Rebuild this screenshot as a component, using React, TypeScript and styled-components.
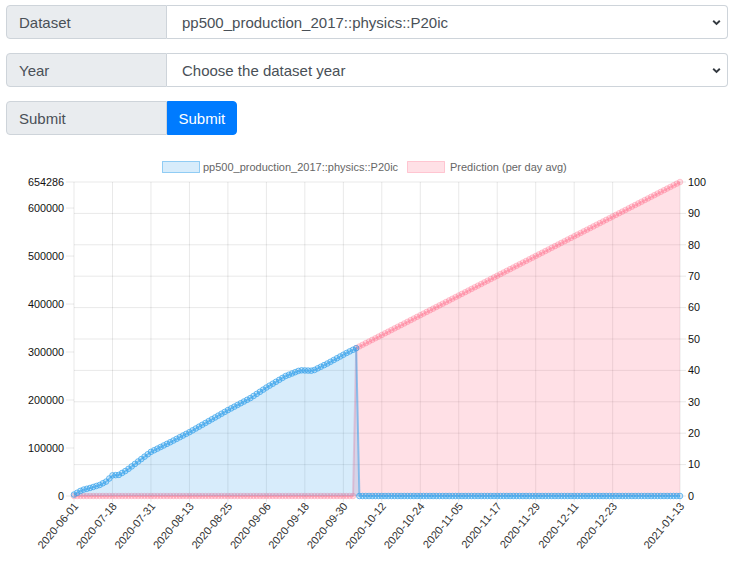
import React from "react";
import styled, { createGlobalStyle } from "styled-components";

const GlobalStyle = createGlobalStyle`
  html, body {
    margin: 0;
    padding: 0;
    background: #fff;
    overflow: hidden;
  }
  body {
    font-family: "Liberation Sans", Arial, sans-serif;
  }
`;

const Form = styled.div`
  padding: 5px 8px 0 6px;
`;

const InputGroup = styled.div`
  display: flex;
  height: 34px;
  margin-bottom: 14px;
`;

const Prepend = styled.div`
  width: 161px;
  box-sizing: border-box;
  display: flex;
  align-items: center;
  padding: 0 12px;
  background: #e9ecef;
  border: 1px solid #ced4da;
  border-radius: 4px 0 0 4px;
  color: #495057;
  font-size: 15px;
`;

const SelectBox = styled.div`
  flex: 1;
  display: flex;
  align-items: center;
  justify-content: space-between;
  padding: 0 6px 0 15px;
  border: 1px solid #ced4da;
  border-left: none;
  border-radius: 0 4px 4px 0;
  color: #495057;
  font-size: 15px;
`;

const SubmitButton = styled.button`
  height: 34px;
  padding: 0 10.5px;
  border: 1px solid #007bff;
  background: #007bff;
  color: #fff;
  font-family: inherit;
  font-size: 15px;
  border-radius: 0 4px 4px 0;
  cursor: pointer;
`;

const ChartSvg = styled.svg`
  display: block;
  font-family: "Liberation Sans", Arial, sans-serif;
`;

const Chevron = () => (
  <svg width="9" height="7" viewBox="0 0 9 7">
    <path d="M1.2 1.8 L4.5 5 L7.8 1.8" fill="none" stroke="#343a40" strokeWidth="1.9" />
  </svg>
);

// chart geometry
const X0 = 74;
const X1 = 680;
const Y0 = 496;
const Y1 = 182;
const N = 190;
const LEFT_MAX = 654286;
const CUT = 88;

const xAt = (i: number) => X0 + (i * (X1 - X0)) / (N - 1);
const yLeft = (v: number) => Y0 - (v / LEFT_MAX) * (Y0 - Y1);
const yRight = (v: number) => Y0 - (v / 100) * (Y0 - Y1);

const blueKeys: [number, number][] = [
  [0, 3000], [2.5, 12500], [5, 16700], [8, 23000], [10, 30000], [12, 43000],
  [14, 44000], [16.5, 54000], [20.6, 75000], [24, 92000], [30, 112000],
  [36, 133000], [42, 156000], [48, 179000], [55, 204000], [60, 226000],
  [66, 250000], [70.5, 262000], [74.5, 261000], [79, 276000], [85, 298000],
  [88, 308000],
];

const interp = (i: number) => {
  for (let k = 0; k < blueKeys.length - 1; k++) {
    const [a, va] = blueKeys[k];
    const [b, vb] = blueKeys[k + 1];
    if (i >= a && i <= b) return va + ((i - a) / (b - a)) * (vb - va);
  }
  return blueKeys[blueKeys.length - 1][1];
};

const idx = Array.from({ length: N }, (_, i) => i);
const bluePts = idx.map((i) => [xAt(i), i <= CUT ? yLeft(interp(i)) : Y0]);
const pinkPts = idx.map((i) => [
  xAt(i),
  i < CUT ? Y0 : yRight(47.1 + ((i - CUT) / (N - 1 - CUT)) * 52.9),
]);

const linePath = (pts: number[][]) =>
  pts.map(([x, y], k) => `${k ? "L" : "M"}${x.toFixed(1)} ${y.toFixed(1)}`).join(" ");
const areaPath = (pts: number[][]) =>
  `${linePath(pts)} L${X1} ${Y0} L${X0} ${Y0} Z`;

const xTicks: [number, string][] = [
  [0, "2020-06-01"], [12, "2020-07-18"], [24, "2020-07-31"], [36, "2020-08-13"],
  [48, "2020-08-25"], [60, "2020-09-06"], [72, "2020-09-18"], [84, "2020-09-30"],
  [96, "2020-10-12"], [108, "2020-10-24"], [120, "2020-11-05"], [132, "2020-11-17"],
  [144, "2020-11-29"], [156, "2020-12-11"], [168, "2020-12-23"], [189, "2021-01-13"],
];

const leftTicks = [0, 100000, 200000, 300000, 400000, 500000, 600000, 654286];
const rightTicks = [0, 10, 20, 30, 40, 50, 60, 70, 80, 90, 100];

const GRID = "rgba(0,0,0,0.09)";
const BLUE_LINE = "rgba(54,162,235,0.7)";
const BLUE_FILL = "rgba(54,162,235,0.2)";
const PINK_LINE = "rgba(255,99,132,0.3)";
const PINK_FILL = "rgba(255,99,132,0.2)";

function Chart() {
  return (
    <ChartSvg width="736" height="414" viewBox="0 149 736 414">
      {/* legend */}
      <rect x="162.5" y="161.5" width="37" height="11" fill={BLUE_FILL} stroke="rgba(54,162,235,0.5)" />
      <text x="203" y="171" fontSize="11" fill="#666">pp500_production_2017::physics::P20ic</text>
      <rect x="407.5" y="161.5" width="37" height="11" fill={PINK_FILL} stroke={PINK_LINE} />
      <text x="450" y="171" fontSize="11" fill="#666">Prediction (per day avg)</text>

      {/* grid */}
      {rightTicks.map((t) => (
        <line key={`h${t}`} x1={X0} x2={X1 + 6} y1={yRight(t)} y2={yRight(t)} stroke={GRID} />
      ))}
      {xTicks.map(([i]) => (
        <line key={`v${i}`} x1={xAt(i)} x2={xAt(i)} y1={Y1} y2={Y0 + 6} stroke={GRID} />
      ))}
      {leftTicks.map((t) => (
        <line key={`l${t}`} x1={X0 - 8} x2={X0} y1={yLeft(t)} y2={yLeft(t)} stroke={GRID} />
      ))}

      {/* datasets */}
      <path d={areaPath(pinkPts)} fill={PINK_FILL} />
      <path d={linePath(pinkPts)} fill="none" stroke={PINK_LINE} strokeWidth="2" />
      {pinkPts.map(([x, y], k) => (
        <circle key={`p${k}`} cx={x} cy={y} r="2.8" fill={PINK_FILL} stroke={PINK_LINE} />
      ))}
      <path d={areaPath(bluePts)} fill={BLUE_FILL} />
      <path d={linePath(bluePts)} fill="none" stroke="rgba(54,162,235,0.55)" strokeWidth="2" />
      {bluePts.map(([x, y], k) => (
        <circle key={`b${k}`} cx={x} cy={y} r="2.8" fill={BLUE_FILL} stroke={BLUE_LINE} />
      ))}

      {/* axis labels */}
      {leftTicks.map((t) => (
        <text key={`lt${t}`} x={X0 - 10} y={yLeft(t)} dy="0.35em" fontSize="10.8" fill="#111" textAnchor="end">
          {t}
        </text>
      ))}
      {rightTicks.map((t) => (
        <text key={`rt${t}`} x={X1 + 8} y={yRight(t)} dy="0.35em" fontSize="10.8" fill="#111">
          {t}
        </text>
      ))}
      {xTicks.map(([i, label]) => (
        <text
          key={`xt${i}`}
          x={xAt(i) + 2}
          y={Y0 + 8}
          dy="0.35em"
          fontSize="11"
          fill="#333"
          textAnchor="end"
          transform={`rotate(-50 ${xAt(i) + 2} ${Y0 + 8})`}
        >
          {label}
        </text>
      ))}
    </ChartSvg>
  );
}

export default function App() {
  return (
    <>
      <GlobalStyle />
      <Form>
        <InputGroup>
          <Prepend>Dataset</Prepend>
          <SelectBox>
            <span>pp500_production_2017::physics::P20ic</span>
            <Chevron />
          </SelectBox>
        </InputGroup>
        <InputGroup>
          <Prepend>Year</Prepend>
          <SelectBox>
            <span>Choose the dataset year</span>
            <Chevron />
          </SelectBox>
        </InputGroup>
        <InputGroup>
          <Prepend>Submit</Prepend>
          <SubmitButton>Submit</SubmitButton>
        </InputGroup>
      </Form>
      <Chart />
    </>
  );
}
